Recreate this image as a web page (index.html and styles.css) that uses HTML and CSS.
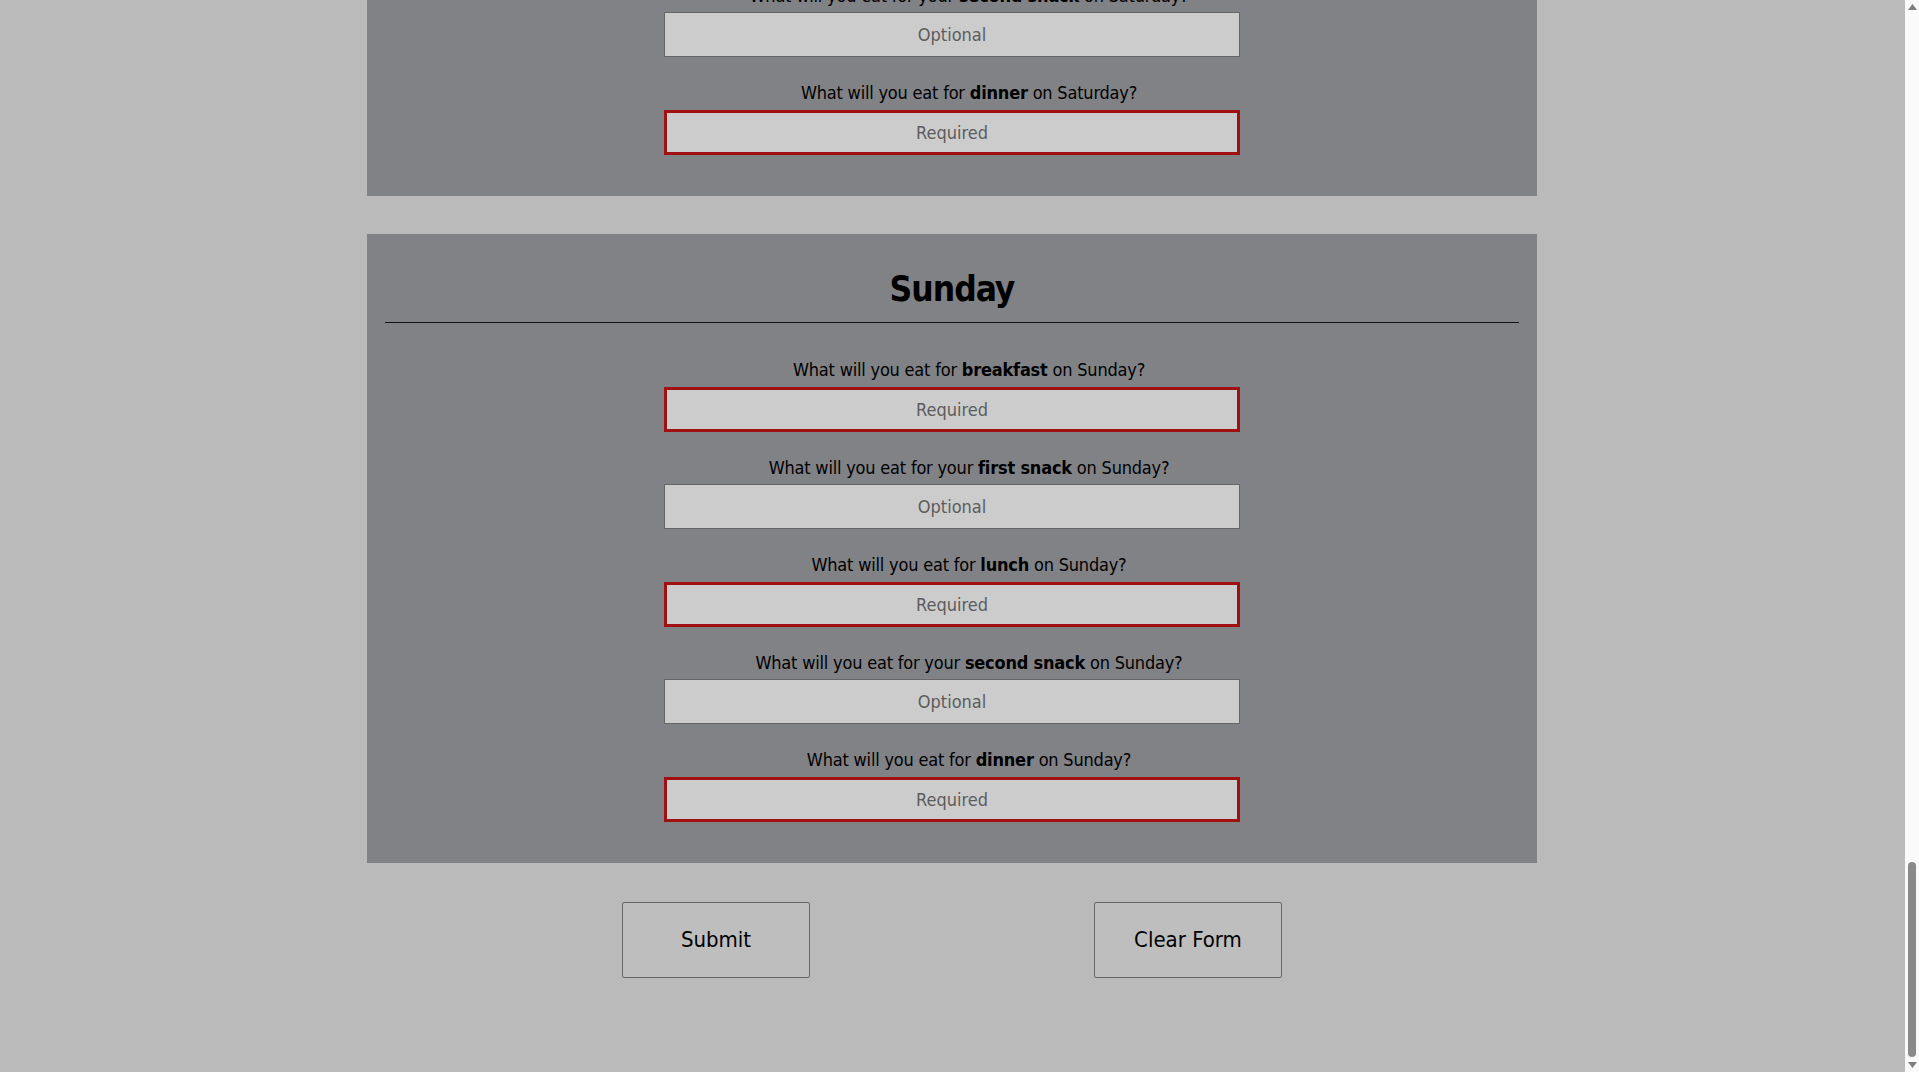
FILE: index.html
```html
<!DOCTYPE html>
<html lang="en">
<head>
<meta charset="utf-8">
<title>Weekly Meal Planner</title>
<link rel="stylesheet" href="styles.css">
</head>
<body>
<header class="page-header">
  <h1>Weekly Meal Planner</h1>
  <p>Plan what you will eat for every meal this week.</p>
</header>
<form class="planner">
  <div class="intro">
    <h2>About You</h2>
    <hr>
    <div class="questions">
      <div class="question"><label>What is your <b>name</b>?</label><input class="required" placeholder="Required"></div>
      <div class="question"><label>What is your <b>email</b>?</label><input placeholder="Optional"></div>
    </div>
  </div>
  <div class="days" id="days"></div>
  <div class="actions">
    <button type="submit">Submit</button>
    <button type="reset">Clear Form</button>
  </div>
</form>
<div class="scrollbar" aria-hidden="true">
  <svg class="arrow" width="9" height="6" viewBox="0 0 9 6"><path d="M4.5 0L9 6H0z" fill="#7d7d7d"/></svg>
  <div class="track"><div class="thumb"></div></div>
  <svg class="arrow" width="9" height="6" viewBox="0 0 9 6"><path d="M0 0H9L4.5 6z" fill="#7d7d7d"/></svg>
</div>
<script src="script.js"></script>
</body>
</html>
```
FILE: styles.css
```css
body {
  margin: 0 15px 0 0;
  background: #bababa;
  color: #000;
  font-family: "DejaVu Sans Condensed", "Liberation Sans", sans-serif;
}
.page-header {
  text-align: center;
  padding: 60px 0 40px;
}
.page-header h1 {
  margin: 0;
  font-size: 48px;
}
.page-header p {
  margin: 16px 0 0;
  font-size: 20px;
}
.planner {
  display: flex;
  flex-direction: column;
  align-items: center;
}
.intro {
  width: 1170px;
  box-sizing: border-box;
  background: #818286;
  padding: 27px 18px 41px;
  margin-bottom: 38px;
}
.days {
  width: 1170px;
  display: flex;
  flex-direction: column;
  gap: 38px;
}
.day {
  background: #818286;
  padding: 27px 18px 41px;
}
.day h2,
.intro h2 {
  margin: 0;
  font-size: 35px;
  letter-spacing: -1px;
  line-height: 56px;
  text-align: center;
  font-weight: bold;
}
.day hr,
.intro hr {
  margin: 5px 0 0;
  border: 0;
  border-top: 1px solid #111;
  height: 0;
}
.questions {
  display: flex;
  flex-direction: column;
  align-items: center;
  gap: 24px;
  margin-top: 35.5px;
}
.question {
  display: flex;
  flex-direction: column;
  align-items: center;
  gap: 4.5px;
}
.question label {
  font-size: 18px;
  letter-spacing: -0.2px;
  line-height: 24px;
  padding-left: 34px;
}
.question input {
  width: 576px;
  height: 45px;
  box-sizing: border-box;
  margin: 0;
  background: #cccccc;
  border: 1px solid #666;
  text-align: center;
  font-family: inherit;
  font-size: 18px;
  color: #000;
}
.question input.required {
  border: 3px solid #a01010;
}
.question input::placeholder {
  color: #5c5c5c;
  opacity: 1;
}
.actions {
  display: flex;
  justify-content: center;
  gap: 284px;
  padding: 39px 0 94px;
}
.actions button {
  width: 188px;
  height: 76px;
  background: #bebebe;
  border: 1px solid #666;
  border-radius: 2px;
  font-family: inherit;
  font-size: 22px;
  color: #000;
}
.scrollbar {
  position: fixed;
  top: 0;
  right: 0;
  width: 14px;
  height: 100vh;
  background: #fafafa;
  display: flex;
  flex-direction: column;
  align-items: center;
  padding: 4px 0;
  box-sizing: border-box;
  gap: 5px;
}
.scrollbar .arrow {
  flex: none;
}
.scrollbar .track {
  flex: 1;
  width: 100%;
  display: flex;
  flex-direction: column;
  justify-content: flex-end;
  align-items: center;
}
.scrollbar .thumb {
  width: 8px;
  height: 195px;
  background: #8a8a8a;
  border-radius: 4px;
}
```
FILE: script.js
```js
(function () {
  var days = ["Monday", "Tuesday", "Wednesday", "Thursday", "Friday", "Saturday", "Sunday"];
  var meals = [
    { pre: "What will you eat for ", name: "breakfast", req: true },
    { pre: "What will you eat for your ", name: "first snack", req: false },
    { pre: "What will you eat for ", name: "lunch", req: true },
    { pre: "What will you eat for your ", name: "second snack", req: false },
    { pre: "What will you eat for ", name: "dinner", req: true }
  ];
  var container = document.getElementById("days");
  days.forEach(function (day) {
    var section = document.createElement("section");
    section.className = "day";
    var h = document.createElement("h2");
    h.textContent = day;
    section.appendChild(h);
    section.appendChild(document.createElement("hr"));
    var qs = document.createElement("div");
    qs.className = "questions";
    meals.forEach(function (m) {
      var q = document.createElement("div");
      q.className = "question";
      var label = document.createElement("label");
      label.appendChild(document.createTextNode(m.pre));
      var b = document.createElement("b");
      b.textContent = m.name;
      label.appendChild(b);
      label.appendChild(document.createTextNode(" on " + day + "?"));
      var input = document.createElement("input");
      input.type = "text";
      input.placeholder = m.req ? "Required" : "Optional";
      if (m.req) input.className = "required";
      q.appendChild(label);
      q.appendChild(input);
      qs.appendChild(q);
    });
    section.appendChild(qs);
    container.appendChild(section);
  });
  function toBottom() {
    window.scrollTo(0, document.documentElement.scrollHeight);
  }
  toBottom();
  window.addEventListener("load", toBottom);
})();
```
